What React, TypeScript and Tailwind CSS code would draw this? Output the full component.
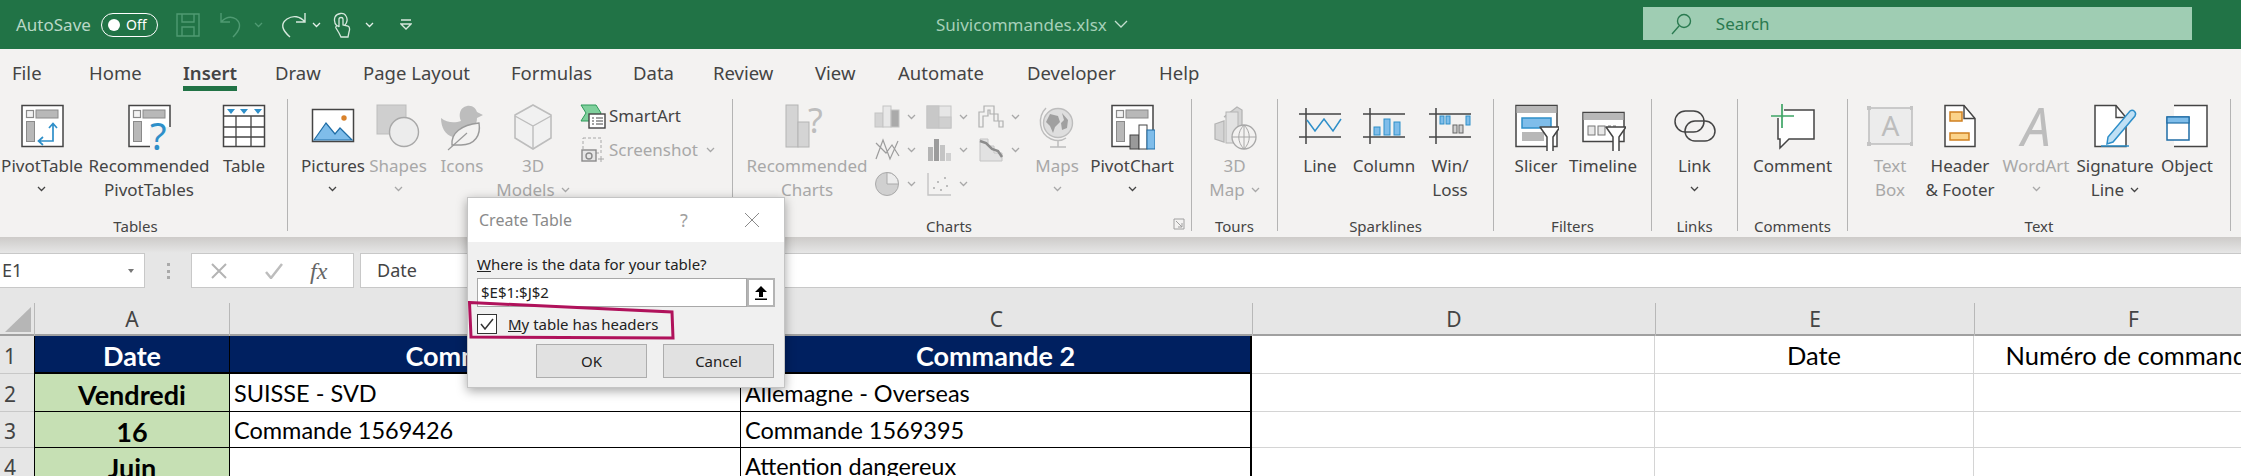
import React from 'react';

const dark = '#444444';
const blue = '#2e8fc9';
const grey = '#b8b8b8';
const pale = '#c4c4c4';

const Icon = ({ children, w = 46, h = 48 }: { children: React.ReactNode; w?: number; h?: number }) => (
  <svg width={w} height={h} viewBox={`0 0 ${w} ${h}`} fill="none" className="shrink-0">
    {children}
  </svg>
);

const Chevron = ({ color = dark }: { color?: string }) => (
  <svg width="9" height="6" viewBox="0 0 9 6" fill="none" className="shrink-0">
    <path d="M1 1l3.5 3.5L8 1" stroke={color} strokeWidth="1.3" />
  </svg>
);

const PivotBase = () => (
  <>
    <rect x="3" y="2.500" width="41" height="41" fill="#fff" stroke={dark} strokeWidth="1.5" />
    <rect x="7.500" y="7.500" width="7" height="7" fill="#f3f3f3" stroke="#8a8a8a" strokeWidth="1.2" />
    <rect x="17" y="7" width="22" height="8" fill={grey} stroke="#8a8a8a" />
    <rect x="7.500" y="18.500" width="8" height="20" fill={grey} stroke="#8a8a8a" />
  </>
);

const PivotTableIcon = () => (
  <Icon>
    <PivotBase />
    <path d="M34 21v17h-14M30 25l4-4.500 4 4.500M24 34l-4.500 4 4.500 4" stroke={blue} strokeWidth="1.7" />
  </Icon>
);

const RecommendedPivotIcon = () => (
  <Icon>
    <PivotBase />
    <rect x="24" y="24" width="22" height="24" fill="#f3f2f1" />
    <text x="24" y="47" fontSize="38" fill={blue} fontFamily="Noto Sans, sans-serif">?</text>
  </Icon>
);

const TableIcon = () => (
  <Icon>
    <rect x="2.500" y="2.500" width="41" height="41" fill="#fff" stroke={dark} strokeWidth="1.5" />
    <path d="M3 13h40M3 24h40M3 34h40M15 13v30M30 13v30" stroke={dark} strokeWidth="1.3" />
    <path d="M6 6h8l-4 5zM19 6h8l-4 5zM33 6h8l-4 5z" fill={blue} />
  </Icon>
);

const PicturesIcon = () => (
  <Icon>
    <rect x="2.500" y="6.500" width="41" height="32" fill="#fff" stroke={dark} strokeWidth="1.5" />
    <path d="M4 37l12-17 9 11 5-6 12 12z" fill="#7fbdea" stroke="#1f6da6" strokeWidth="1.2" />
    <circle cx="34" cy="15" r="2.700" fill="#d9822b" />
  </Icon>
);

const ShapesIcon = () => (
  <Icon>
    <rect x="2" y="2" width="29" height="29" fill="#cfcfcf" stroke="#bdbdbd" />
    <circle cx="29" cy="29" r="14.500" fill="#ececec" stroke="#a8a8a8" strokeWidth="1.4" />
  </Icon>
);

const IconsIcon = () => (
  <Icon>
    <path d="M2 15C8 20 16 20 22 18C19 12 21 4 28 3C34 2 37 6 38 9L44 12L38 15C38 22 34 26 28 30L14 34C6 32 2 24 2 15z" fill="#bdbdbd" />
    <path d="M13 42C12 30 22 22 40 20C42 32 36 42 22 42z" fill="#f3f2f1" stroke="#9a9a9a" strokeWidth="1.4" />
    <path d="M9 47L28 30" stroke="#9a9a9a" strokeWidth="1.2" />
  </Icon>
);

const CubeIcon = () => (
  <Icon>
    <path d="M23 2l18 10v23L23 46 5 35V12z" fill="#f1f1f1" stroke="#bdbdbd" strokeWidth="1.6" />
    <path d="M5 13l18 10 18-10M23 23v22" stroke="#bdbdbd" strokeWidth="1.4" />
  </Icon>
);

const RecommendedChartsIcon = () => (
  <Icon>
    <rect x="2" y="2" width="12" height="42" fill="#d4d4d4" stroke="#b4b4b4" />
    <rect x="14" y="19" width="11" height="25" fill="#d4d4d4" stroke="#b4b4b4" />
    <text x="24" y="30" fontSize="34" fill="#bdbdbd" fontFamily="Noto Sans, sans-serif">?</text>
  </Icon>
);

const GlobeIcon = () => (
  <Icon>
    <circle cx="24" cy="20" r="14.500" fill="#dedede" stroke="#bdbdbd" strokeWidth="1.4" />
    <path d="M16 11l8 2 2 6-5 5-2 6-3-7-4-4zM28 10l6 7-1 8-5 2-1-7 3-3z" fill="#a0a0a0" />
    <path d="M12 5C3 14 5 31 17 36c5 2 11 2 15-1M24 38v6M16 44h16" stroke="#bdbdbd" strokeWidth="1.5" />
  </Icon>
);

const PivotChartIcon = () => (
  <Icon>
    <PivotBase />
    <rect x="21" y="32" width="9" height="14" fill="#9a9a9a" stroke={dark} />
    <rect x="30" y="22" width="8" height="24" fill="#fff" stroke={dark} />
    <rect x="38" y="27" width="8" height="19" fill="#7fbdea" stroke="#1f6da6" />
  </Icon>
);

const MapIcon = () => (
  <Icon>
    <path d="M3 21l9-3v21l-9-3zM12 14l13-10 5 3v20" fill="#d4d4d4" stroke="#b4b4b4" strokeWidth="1.3" />
    <rect x="14" y="9" width="12" height="31" fill="#e2e2e2" stroke="#b4b4b4" />
    <circle cx="32" cy="34" r="12" fill="#f3f2f1" stroke="#a8a8a8" strokeWidth="1.3" />
    <path d="M20 34h24M32 22v24M32 22c-7 7-7 17 0 24M32 22c7 7 7 17 0 24" stroke="#a8a8a8" />
  </Icon>
);

const SparkFrame = () => (
  <path d="M2 11h42M2 34h42M9 5v36" stroke={dark} strokeWidth="1.5" />
);

const LineSparkIcon = () => (
  <Icon>
    <SparkFrame />
    <path d="M10 17l8 11 9-12 9 12 8-12" stroke={blue} strokeWidth="1.5" />
  </Icon>
);

const ColumnSparkIcon = () => (
  <Icon>
    <SparkFrame />
    <rect x="13" y="24" width="6" height="8" fill="#7fbdea" stroke={blue} />
    <rect x="23" y="16" width="6" height="16" fill="#7fbdea" stroke={blue} />
    <rect x="33" y="19" width="6" height="13" fill="#7fbdea" stroke={blue} />
  </Icon>
);

const WinLossIcon = () => (
  <Icon>
    <SparkFrame />
    <rect x="13" y="13" width="4" height="8" fill="#7fbdea" stroke={blue} />
    <rect x="19" y="13" width="4" height="8" fill="#7fbdea" stroke={blue} />
    <rect x="26" y="22" width="4" height="8" fill="#d0d0d0" stroke="#666" />
    <rect x="32" y="22" width="4" height="8" fill="#d0d0d0" stroke="#666" />
    <rect x="39" y="13" width="4" height="9" fill="#7fbdea" stroke={blue} />
  </Icon>
);

const Funnel = ({ x, y }: { x: number; y: number }) => (
  <path
    d={`M${x} ${y}h20l-7 10v15h-6V${y + 10}z`}
    fill="#fff"
    stroke={dark}
    strokeWidth="1.5"
    strokeLinejoin="round"
  />
);

const SlicerIcon = () => (
  <Icon>
    <rect x="3" y="2.500" width="41" height="41" fill="#fff" stroke={dark} strokeWidth="1.5" />
    <rect x="3.500" y="3" width="40" height="7" fill={grey} />
    <rect x="9" y="15" width="29" height="10" fill="#7fbdea" stroke={blue} strokeWidth="1.5" />
    <rect x="9" y="29" width="22" height="9" fill={grey} />
    <Funnel x={27} y={24} />
  </Icon>
);

const TimelineIcon = () => (
  <Icon>
    <rect x="3" y="9.500" width="41" height="29" fill="#fff" stroke={dark} strokeWidth="1.5" />
    <rect x="3.500" y="10" width="40" height="7" fill={grey} />
    <rect x="8" y="23" width="7" height="9" fill="#e8e8e8" stroke="#777" />
    <rect x="18" y="23" width="7" height="9" fill="#e8e8e8" stroke="#777" />
    <path d="M28 23h10" stroke="#777" strokeDasharray="3 2" />
    <Funnel x={26} y={24} />
  </Icon>
);

const LinkIcon = () => (
  <Icon>
    <rect x="3" y="8" width="29" height="21" rx="10.500" stroke={dark} strokeWidth="1.5" />
    <rect x="13" y="18" width="30" height="20" rx="10" stroke={dark} strokeWidth="1.5" />
  </Icon>
);

const CommentIcon = () => (
  <Icon>
    <path d="M8 7h36v29H19l-9 9v-9H8z" fill="#fff" stroke={dark} strokeWidth="1.5" />
    <rect x="0" y="5" width="14" height="10" fill="#f3f2f1" />
    <path d="M12 1v24M1 13h23" stroke="#3ea566" strokeWidth="1.700" />
  </Icon>
);

const TextBoxIcon = () => (
  <Icon>
    <rect x="2" y="5" width="43" height="36" fill="#ececec" stroke="#bdbdbd" strokeWidth="1.500" />
    <path d="M0 3h4v4H0zM43 3h4v4h-4zM0 39h4v4H0zM43 39h4v4h-4z" fill="#c4c4c4" />
    <text x="23.500" y="33" fontSize="28" textAnchor="middle" fill="#bdbdbd" fontFamily="Noto Sans, sans-serif">A</text>
  </Icon>
);

const HeaderFooterIcon = () => (
  <Icon>
    <path d="M8 2.500h19l11 13v28H8z" fill="#fff" stroke={dark} strokeWidth="1.500" />
    <path d="M27 2.500v13h11" stroke={dark} strokeWidth="1.400" />
    <rect x="13" y="9" width="12" height="9" fill="#fbd38a" stroke="#d08020" strokeWidth="1.500" />
    <rect x="13" y="30" width="19" height="7" fill="#fbd38a" stroke="#d08020" strokeWidth="1.500" />
  </Icon>
);

const WordArtIcon = () => (
  <Icon>
    <text x="23" y="43" fontSize="52" textAnchor="middle" fill="#bdbdbd" fontStyle="italic" fontFamily="Noto Sans, sans-serif">A</text>
  </Icon>
);

const SignatureIcon = () => (
  <Icon>
    <path d="M3 2.500h21l10 12v29H3z" fill="#fff" stroke={dark} strokeWidth="1.500" />
    <path d="M24 2.500v12h10" stroke={dark} strokeWidth="1.400" />
    <path d="M38 8c3-2 7 1 5 5L21 39l-6 2 1-7z" fill="#bfe0f5" stroke={blue} strokeWidth="1.500" />
    <path d="M9 43h28" stroke={blue} strokeWidth="1.500" />
  </Icon>
);

const ObjectIcon = () => (
  <Icon>
    <path d="M10 2.500h33v41H10" fill="#fff" stroke={dark} strokeWidth="1.500" />
    <rect x="3" y="14" width="22" height="23" fill="#fff" stroke="#1f6da6" strokeWidth="1.500" />
    <rect x="3" y="14" width="22" height="6" fill="#7fbdea" stroke="#1f6da6" strokeWidth="1.200" />
  </Icon>
);

const chartSmall: React.ReactNode[] = [
  <>
    <rect x="1" y="9" width="8" height="14" fill="#d4d4d4" stroke={pale} />
    <rect x="9" y="2" width="8" height="21" fill="#e8e8e8" stroke={pale} />
    <rect x="17" y="6" width="8" height="17" fill="#aaaaaa" stroke={pale} />
  </>,
  <>
    <rect x="1" y="2" width="24" height="22" fill="#e6e6e6" stroke={pale} />
    <rect x="1" y="2" width="12" height="22" fill="#c8c8c8" stroke={pale} />
    <rect x="13" y="13" width="12" height="11" fill="#d0d0d0" stroke={pale} />
  </>,
  <path d="M1 23V8h5V2h10v8h4v7h5v6h-4v-6h-5v-7h-4V6h-2v6H5v11z" stroke="#b0b0b0" strokeWidth="1.200" />,
  <path d="M2 22L9 3l7 19 8-18M2 6l10 10 6-8 7 11" stroke="#9c9c9c" strokeWidth="1.200" />,
  <>
    <rect x="2" y="10" width="5" height="14" fill="#b4b4b4" />
    <rect x="8" y="2" width="5" height="22" fill="#9c9c9c" />
    <rect x="14" y="8" width="5" height="16" fill="#c4c4c4" />
    <rect x="20" y="16" width="5" height="8" fill="#d0d0d0" />
  </>,
  <>
    <path d="M2 2h8v7h6v7h8v8H2z" fill="#e2e2e2" stroke={pale} />
    <path d="M2 4l6 2 6 6 6 2 4 6" stroke="#8c8c8c" strokeWidth="2.500" />
  </>,
  <>
    <circle cx="13" cy="13" r="11.500" fill="#d0d0d0" stroke="#aaaaaa" />
    <path d="M13 13V1.500A11.500 11.500 0 0 1 24.500 13z" fill="#ececec" stroke="#aaaaaa" />
  </>,
  <>
    <path d="M2 2v22h23" stroke={pale} strokeWidth="1.400" />
    <path d="M7 16h2v2H7zM11 10h2v2h-2zM14 18h2v2h-2zM18 6h2v2h-2zM20 14h2v2h-2z" fill="#bdbdbd" />
  </>,
];

type BtnProps = {
  className: string;
  icon: React.ReactNode;
  lines: string[];
  chevron?: 'own' | 'inline';
  off?: boolean;
};

// one big ribbon button, icon on top and label under it
const Btn = ({ className, icon, lines, chevron, off }: BtnProps) => (
  <div className={`flex flex-col items-center pt-[4px] ${className}`}>
    <div className="flex h-[51px] justify-center">{icon}</div>
    <div className={`flex flex-col items-center whitespace-nowrap text-[17px] leading-[24px] ${off ? 'text-[#a8a8a8]' : 'text-[#444]'}`}>
      {lines.map((l, i) => (
        <span key={i} className="flex items-center gap-[6px]">
          {l}
          {chevron === 'inline' && i === lines.length - 1 && <Chevron color={off ? '#a8a8a8' : dark} />}
        </span>
      ))}
      {chevron === 'own' && (
        <span className="flex h-[20px] items-center pt-[1px]">
          <Chevron color={off ? '#a8a8a8' : dark} />
        </span>
      )}
    </div>
  </div>
);

const Group = ({ className, label, labelClass, children }: { className: string; label: string; labelClass?: string; children: React.ReactNode }) => (
  <div className={`relative flex h-[132px] flex-col border-r border-[#b4b4b4] ${className}`}>
    <div className="flex h-[116px]">{children}</div>
    <div className={`h-[16px] text-center text-[15px] leading-[22px] text-[#444] ${labelClass ?? ''}`}>{label}</div>
  </div>
);

const tabs = [
  ['File', 'w-[77px]'],
  ['Home', 'w-[94px]'],
  ['Insert', 'w-[92px]'],
  ['Draw', 'w-[88px]'],
  ['Page Layout', 'w-[148px]'],
  ['Formulas', 'w-[122px]'],
  ['Data', 'w-[80px]'],
  ['Review', 'w-[102px]'],
  ['View', 'w-[83px]'],
  ['Automate', 'w-[129px]'],
  ['Developer', 'w-[132px]'],
  ['Help', 'w-[60px]'],
];

const TitleBar = () => (
  <div className="flex h-[49px] items-center bg-[#217346] pl-[16px] text-[#c4dfcf]">
    <span className="w-[85px] text-[17px] text-[#b9d8c6]">AutoSave</span>
    <div className="flex h-[24px] w-[57px] items-center rounded-full border-[1.5px] border-white pl-[6px]">
      <span className="h-[12px] w-[12px] rounded-full bg-white" />
      <span className="ml-[6px] text-[14px] text-white">Off</span>
    </div>
    <svg width="24" height="24" viewBox="0 0 24 24" fill="none" stroke="#4f9a72" strokeWidth="1.400" className="ml-[18px]">
      <path d="M1 1h22v22H1zM6 1v8h12V1M6 23v-9h12v9" />
    </svg>
    <svg width="24" height="26" viewBox="0 0 24 26" fill="none" stroke="#4f9a72" strokeWidth="1.400" className="ml-[20px]">
      <path d="M1 1v9h9M1 10c5-5 10-6 15-3 6 5 4 11-3 18" />
    </svg>
    <span className="ml-[10px]"><Chevron color="#4f9a72" /></span>
    <svg width="26" height="26" viewBox="0 0 26 26" fill="none" stroke="#d6e8dd" strokeWidth="1.400" className="ml-[17px]">
      <path d="M25 1v9h-9M25 10c-5-6-12-7-18-3-7 5-5 11 3 18" />
    </svg>
    <span className="ml-[6px]"><Chevron color="#e4f0e9" /></span>
    <svg width="18" height="26" viewBox="0 0 18 26" fill="none" stroke="#d6e8dd" strokeWidth="1.300" className="ml-[12px]">
      <path d="M4 14c-3-3-3-6-2-9 2-4 9-5 11-1 2 3 1 7-1 9M6 21l-3-5c-1-2 2-3 3-1V7c0-2 4-2 4 0v6l5 1c2 1 2 3 1 6l-1 5H8z" />
    </svg>
    <span className="ml-[14px]"><Chevron color="#e4f0e9" /></span>
    <svg width="12" height="11" viewBox="0 0 12 11" fill="none" stroke="#d6e8dd" strokeWidth="1.300" className="ml-[26px]">
      <path d="M1 1h10M1 5h10L6 10z" />
    </svg>
    <span className="ml-[524px] text-[17px] text-[#a6d0b8]">Suivicommandes.xlsx</span>
    <svg width="14" height="9" viewBox="0 0 14 9" fill="none" stroke="#c4dfcf" strokeWidth="1.300" className="ml-[7px]">
      <path d="M1 1l6 6 6-6" />
    </svg>
    <div className="mb-[2px] ml-[515px] flex h-[33px] w-[549px] items-center bg-[#9fcdb3] pl-[28px] text-[17px] text-[#2a7a50]">
      <svg width="21" height="22" viewBox="0 0 21 22" fill="none" stroke="#2a7a50" strokeWidth="1.400">
        <circle cx="13" cy="8" r="6.500" />
        <path d="M8 13l-7 8" />
      </svg>
      <span className="ml-[24px]">Search</span>
    </div>
  </div>
);

const Ribbon = () => (
  <div className="h-[188px] bg-[#f3f2f1]">
    <div className="flex h-[50px] pl-[12px] text-[18.5px] text-[#444]">
      {tabs.map(([name, w]) => (
        <div key={name} className={`relative shrink-0 whitespace-nowrap pt-[10px] leading-[28px] ${w} ${name === 'Insert' ? 'font-semibold' : ''}`}>
          {name}
          {name === 'Insert' && <span className="absolute left-0 top-[37px] h-[5px] w-[54px] bg-[#217346]" />}
        </div>
      ))}
    </div>
    <div className="flex h-[132px]">
      <Group className="w-[288px] shrink-0" label="Tables" labelClass="pr-[16px]">
        <Btn className="w-[84px]" icon={<PivotTableIcon />} lines={['PivotTable']} chevron="own" />
        <Btn className="w-[130px]" icon={<RecommendedPivotIcon />} lines={['Recommended', 'PivotTables']} />
        <Btn className="w-[60px]" icon={<TableIcon />} lines={['Table']} />
      </Group>
      <Group className="w-[445px] shrink-0" label="">
        <Btn className="ml-[12px] w-[66px]" icon={<PicturesIcon />} lines={['Pictures']} chevron="own" />
        <Btn className="w-[64px]" icon={<ShapesIcon />} lines={['Shapes']} chevron="own" off />
        <Btn className="w-[64px]" icon={<IconsIcon />} lines={['Icons']} off />
        <Btn className="w-[78px]" icon={<CubeIcon />} lines={['3D', 'Models']} chevron="inline" off />
        <div className="ml-[8px] flex flex-col whitespace-nowrap text-[17px]">
          <div className="flex h-[34px] items-center gap-[3px] text-[#444]">
            <svg width="26" height="26" viewBox="0 0 26 26" fill="none">
              <path d="M1 2h15l5 8-5 8H1l5-8z" fill="#7fd09c" stroke="#2e9a5a" />
              <rect x="9" y="11" width="16" height="14" fill="#fff" stroke={dark} strokeWidth="1.400" />
              <path d="M12 15h2M16 15h7M12 18h2M16 18h7M12 21h2M16 21h7" stroke={dark} />
            </svg>
            SmartArt
          </div>
          <div className="flex h-[34px] items-center gap-[3px] text-[#a8a8a8]">
            <svg width="26" height="26" viewBox="0 0 26 26" fill="none">
              <rect x="3" y="1" width="18" height="15" stroke="#a8a8a8" strokeDasharray="3 2" />
              <rect x="2" y="13" width="14" height="11" fill="#e6e6e6" stroke="#8a8a8a" strokeWidth="1.400" />
              <circle cx="9" cy="19" r="3" stroke="#8a8a8a" strokeWidth="1.400" />
              <path d="M21 19v6M18 22h6" stroke="#a8a8a8" />
            </svg>
            Screenshot
            <span className="ml-[5px]"><Chevron color="#a8a8a8" /></span>
          </div>
        </div>
      </Group>
      <Group className="w-[459px] shrink-0" label="Charts" labelClass="pr-[26px]">
        <Btn className="ml-[19px] w-[110px]" icon={<RecommendedChartsIcon />} lines={['Recommended', 'Charts']} off />
        <div className="ml-[12px] grid h-[102px] w-[156px] shrink-0 grid-cols-3 grid-rows-3 pt-[1px]">
          {chartSmall.map((c, i) => (
            <div key={i} className="flex items-center gap-[7px]">
              <svg width="26" height="26" viewBox="0 0 26 26" fill="none">{c}</svg>
              <Chevron color="#a8a8a8" />
            </div>
          ))}
        </div>
        <Btn className="w-[54px]" icon={<GlobeIcon />} lines={['Maps']} chevron="own" off />
        <Btn className="w-[96px]" icon={<PivotChartIcon />} lines={['PivotChart']} chevron="own" />
        <svg width="12" height="12" viewBox="0 0 12 12" fill="none" stroke="#a0a0a0" className="absolute bottom-[1px] right-[6px]">
          <path d="M1 11V1h10v10zM3 3l6 6M5 9h4V5" />
        </svg>
      </Group>
      <Group className="w-[86px] shrink-0" label="Tours">
        <Btn className="w-[85px]" icon={<MapIcon />} lines={['3D', 'Map']} chevron="inline" off />
      </Group>
      <Group className="w-[216px] shrink-0" label="Sparklines">
        <Btn className="ml-[12px] w-[60px]" icon={<LineSparkIcon />} lines={['Line']} />
        <Btn className="w-[68px]" icon={<ColumnSparkIcon />} lines={['Column']} />
        <Btn className="w-[64px]" icon={<WinLossIcon />} lines={['Win/', 'Loss']} />
      </Group>
      <Group className="w-[158px] shrink-0" label="Filters">
        <Btn className="ml-[6px] w-[72px]" icon={<SlicerIcon />} lines={['Slicer']} />
        <Btn className="w-[62px]" icon={<TimelineIcon />} lines={['Timeline']} />
      </Group>
      <Group className="w-[86px] shrink-0" label="Links">
        <Btn className="w-[85px]" icon={<LinkIcon />} lines={['Link']} chevron="own" />
      </Group>
      <Group className="w-[110px] shrink-0" label="Comments">
        <Btn className="w-[109px]" icon={<CommentIcon />} lines={['Comment']} />
      </Group>
      <Group className="w-[383px] shrink-0" label="Text">
        <Btn className="ml-[16px] w-[52px]" icon={<TextBoxIcon />} lines={['Text', 'Box']} off />
        <Btn className="w-[88px]" icon={<HeaderFooterIcon />} lines={['Header', '& Footer']} />
        <Btn className="w-[64px]" icon={<WordArtIcon />} lines={['WordArt']} chevron="own" off />
        <Btn className="w-[94px]" icon={<SignatureIcon />} lines={['Signature', 'Line']} chevron="inline" />
        <Btn className="w-[50px]" icon={<ObjectIcon />} lines={['Object']} />
      </Group>
    </div>
  </div>
);

const FormulaBar = () => (
  <div className="h-[51px] bg-gradient-to-b from-[#cdcbc9] to-[#e6e6e6] to-[31%]">
    <div className="flex h-[51px] items-end bg-transparent">
      <div className="flex h-[35px] w-full bg-[#e6e6e6] text-[18px] text-[#444]">
        <div className="flex w-[145px] items-center justify-between border border-l-0 border-[#c8c8c8] bg-white pl-[2px] pr-[10px]">
          E1
          <span className="h-0 w-0 border-x-[3px] border-t-[4px] border-x-transparent border-t-[#777]" />
        </div>
        <div className="flex w-[46px] items-center justify-center">
          <span className="h-[16px] border-l-[3px] border-dotted border-[#aaa]" />
        </div>
        <div className="flex w-[163px] items-center border border-[#c8c8c8] bg-white text-[#a8a8a8]">
          <svg width="16" height="16" viewBox="0 0 16 16" fill="none" stroke="#b4b4b4" strokeWidth="2" className="ml-[19px]">
            <path d="M1 1l14 14M15 1L1 15" />
          </svg>
          <svg width="18" height="16" viewBox="0 0 18 16" fill="none" stroke="#bdbdbd" strokeWidth="2.500" className="ml-[38px]">
            <path d="M1 9l5 6L17 1" />
          </svg>
          <span className="ml-[27px] font-['Liberation_Serif',serif] text-[24px] italic text-[#666]">fx</span>
        </div>
        <div className="ml-[6px] flex flex-1 items-center border border-r-0 border-[#c8c8c8] bg-white pl-[16px]">Date</div>
      </div>
    </div>
  </div>
);

const cols = ['A', 'B', 'C', 'D', 'E', 'F'];

const rows = [
  { n: 1, h: 'h-[38px]', a: 'Date', b: 'Commande 1', c: 'Commande 2', e: 'Date', f: 'Numéro de commande' },
  { n: 2, h: 'h-[38px]', a: 'Vendredi', b: 'SUISSE - SVD', c: 'Allemagne - Overseas', e: '', f: '' },
  { n: 3, h: 'h-[36px]', a: '16', b: 'Commande 1569426', c: 'Commande 1569395', e: '', f: '' },
  { n: 4, h: 'h-[36px]', a: 'Juin', b: '', c: 'Attention dangereux', e: '', f: '' },
];

const sheetCols = 'grid-cols-[34px_195px_511px_512px_403px_319px_318px]';

const Sheet = () => (
  <div className="w-[2292px] font-['Lato',sans-serif] text-[23.5px] leading-none text-black">
    <div className={`grid h-[48px] ${sheetCols} border-b-2 border-[#a0a0a0] bg-[#e6e6e6] font-['Noto_Sans',sans-serif] text-[21px] text-[#444]`}>
      <div className="relative">
        <svg width="26" height="25" viewBox="0 0 26 25" className="absolute left-[5px] top-[19px]">
          <path d="M26 0v25H0z" fill="#b6b6b6" />
        </svg>
      </div>
      {cols.map(c => (
        <div key={c} className="mt-[15px] flex h-[33px] items-center justify-center border-l border-[#b8b8b8]">
          {c}
        </div>
      ))}
    </div>
    {rows.map(r => {
      const head = r.n === 1;
      return (
        <div key={r.n} className={`grid ${sheetCols} ${r.h}`}>
          <div className="flex items-center border-b border-[#c8c8c8] bg-[#e6e6e6] pl-[4px] pt-[3px] font-['Noto_Sans',sans-serif] text-[21px] text-[#444]">{r.n}</div>
          <div className={`flex items-center justify-center border-l border-black pt-[3px] text-[27px] font-bold ${head ? 'border-b-2 bg-[#002060] text-white' : 'border-b bg-[#c6e0b4]'}`}>{r.a}</div>
          <div className={`flex items-center border-l border-black pt-[3px] ${head ? 'justify-center border-b-2 bg-[#002060] text-[27px] font-bold text-white' : 'border-b pl-[4px]'}`}>{r.b}</div>
          <div className={`flex items-center border-l border-r-2 border-black pt-[3px] ${head ? 'justify-center border-b-2 bg-[#002060] text-[27px] font-bold text-white' : 'border-b pl-[4px]'}`}>{r.c}</div>
          <div className="border-b border-r border-[#d4d4d4]" />
          <div className="flex items-center justify-center border-b border-r border-[#d4d4d4] pt-[3px] text-[25.5px]">{r.e}</div>
          <div className="flex items-center justify-center whitespace-nowrap border-b border-[#d4d4d4] pt-[3px] text-[25.5px]">{r.f}</div>
        </div>
      );
    })}
  </div>
);

const CreateTableDialog = () => (
  <div className="absolute left-[467px] top-[197px] h-[191px] w-[318px] border border-[#c4c4c4] bg-[#f0f0f0] text-[15px] text-[#222] shadow-[0_3px_10px_rgba(0,0,0,0.35)]">
    <div className="flex h-[44px] items-center bg-white pl-[11px] text-[16px] text-[#8a8a8a]">
      <span className="w-[201px]">Create Table</span>
      <span className="text-[18px] text-[#a0a0a0]">?</span>
      <svg width="16" height="16" viewBox="0 0 16 16" fill="none" stroke="#8a8a8a" className="ml-[56px]">
        <path d="M1 1l14 14M15 1L1 15" />
      </svg>
    </div>
    <div className="px-[9px] pt-[11px]">
      <div className="leading-[23px]"><span className="underline">W</span>here is the data for your table?</div>
      <div className="mt-[2px] flex h-[29px]">
        <div className="flex flex-1 items-center border border-[#a8a8a8] bg-white pl-[3px]">$E$1:$J$2</div>
        <div className="flex w-[28px] items-center justify-center border-2 border-[#b4b4b4] bg-white">
          <svg width="14" height="14" viewBox="0 0 14 14" fill="#000">
            <path d="M7 0l6 6H9v5H5V6H1zM1 12.500h12V14H1z" />
          </svg>
        </div>
      </div>
      <div className="mt-[7px] flex h-[20px] items-center">
        <div className="flex h-[20px] w-[20px] items-center justify-center border border-[#333] bg-white">
          <svg width="14" height="12" viewBox="0 0 14 12" fill="none" stroke="#333" strokeWidth="1.500">
            <path d="M1 6l4 5 8-10" />
          </svg>
        </div>
        <span className="ml-[11px]"><span className="underline">M</span>y table has headers</span>
      </div>
      <div className="mt-[10px] flex justify-end gap-[16px] pr-[1px]">
        <div className="flex h-[34px] w-[111px] items-center justify-center border border-[#adadad] bg-[#e1e1e1]">OK</div>
        <div className="flex h-[34px] w-[111px] items-center justify-center border border-[#adadad] bg-[#e1e1e1]">Cancel</div>
      </div>
    </div>
    {/* hand drawn highlight over the checkbox row */}
    <svg width="318" height="191" viewBox="0 0 318 191" fill="none" className="absolute -left-px -top-px">
      <path d="M2.500 105.500L205 115l1 26L4 140z" stroke="#b0125b" strokeWidth="3" />
    </svg>
  </div>
);

const App = () => (
  <div className="relative h-[476px] w-[2241px] overflow-hidden bg-white font-['Noto_Sans',sans-serif]">
    <TitleBar />
    <Ribbon />
    <FormulaBar />
    <Sheet />
    <CreateTableDialog />
  </div>
);

export default App;
